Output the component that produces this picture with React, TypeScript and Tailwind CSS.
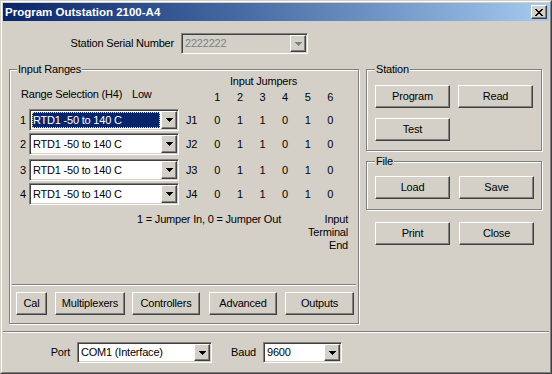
import React from "react";

const jumpers = ["0", "1", "1", "0", "1", "0"];

function Arrow({ disabled = false }: { disabled?: boolean }) {
  const fill = disabled ? "#808080" : "#000000";
  return (
    <svg width="7" height="4" viewBox="0 0 7 4" shapeRendering="crispEdges">
      <rect x="0" y="0" width="7" height="1" fill={fill} />
      <rect x="1" y="1" width="5" height="1" fill={fill} />
      <rect x="2" y="2" width="3" height="1" fill={fill} />
      <rect x="3" y="3" width="1" height="1" fill={fill} />
    </svg>
  );
}

function Btn({ children, className = "" }: { children?: React.ReactNode; className?: string }) {
  return (
    <div
      className={
        "flex items-center justify-center border border-t-white border-l-white border-r-[#404040] border-b-[#404040] bg-[#d4d0c8] shadow-[inset_-1px_-1px_0_#808080] " +
        className
      }
    >
      {children}
    </div>
  );
}

function Combo({
  value,
  className = "",
  selected = false,
  disabled = false,
}: {
  value: string;
  className?: string;
  selected?: boolean;
  disabled?: boolean;
}) {
  return (
    <div
      className={
        "flex border border-t-[#808080] border-l-[#808080] border-r-white border-b-white shadow-[inset_1px_1px_0_#404040,inset_-1px_-1px_0_#d4d0c8] p-px " +
        (disabled ? "bg-[#d4d0c8] " : "bg-white ") +
        className
      }
    >
      <div className="flex min-w-0 flex-1 items-center p-px">
        {selected ? (
          <span className="flex h-full flex-1 items-center bg-[#0a246a] pl-px text-white outline outline-1 -outline-offset-1 outline-dotted outline-[#e8e0a0]">
            {value}
          </span>
        ) : (
          <span className={"pl-px " + (disabled ? "text-[#808080]" : "")}>{value}</span>
        )}
      </div>
      <Btn className="w-[16px]">
        <Arrow disabled={disabled} />
      </Btn>
    </div>
  );
}

function Group({
  label,
  className = "",
  labelClass = "left-[7px]",
  children,
}: {
  label: string;
  className?: string;
  labelClass?: string;
  children?: React.ReactNode;
}) {
  return (
    <div
      className={
        "relative border border-[#808080] shadow-[1px_1px_0_#ffffff,inset_1px_1px_0_#ffffff] " + className
      }
    >
      <span className={"absolute -top-[7px] bg-[#d4d0c8] px-px leading-[13px] " + labelClass}>{label}</span>
      {children}
    </div>
  );
}

function CloseGlyph() {
  const rows = [0, 1, 2, 3, 4, 5, 6];
  return (
    <svg width="8" height="7" viewBox="0 0 8 7" shapeRendering="crispEdges">
      {rows.map((i) => (
        <g key={i}>
          <rect x={i} y={i} width="2" height="1" fill="#000" />
          <rect x={6 - i} y={i} width="2" height="1" fill="#000" />
        </g>
      ))}
    </svg>
  );
}

function RangeRow({ n, className = "", selected = false }: { n: number; className?: string; selected?: boolean }) {
  return (
    <div className={"flex h-[22px] items-center pl-[10px] " + className}>
      <span className="w-[9px]">{n}</span>
      <Combo value="RTD1 -50 to 140 C" selected={selected} className="h-[22px] w-[150px]" />
      <span className="ml-[7px] w-[20px]">J{n}</span>
      {jumpers.map((v, i) => (
        <span key={i} className="w-[22.6px] text-center">
          {v}
        </span>
      ))}
    </div>
  );
}

export default function App() {
  return (
    <div className="h-[374px] w-[552px] border border-t-[#d4d0c8] border-l-[#d4d0c8] border-r-[#404040] border-b-[#404040] bg-[#d4d0c8] font-['Liberation_Sans',Arial,sans-serif] text-[11px] leading-[13px] tracking-[-0.2px] text-black">
      <div className="flex h-full flex-col border border-t-white border-l-white border-r-[#808080] border-b-[#808080] p-px">
        {/* title bar */}
        <div className="flex h-[18px] items-center bg-gradient-to-r from-[#0a246a] to-[#a6caf0] pl-[2px] pr-[2px]">
          <span className="flex-1 text-[11.5px] font-bold tracking-normal text-white">Program Outstation 2100-A4</span>
          <Btn className="h-[14px] w-[16px]">
            <CloseGlyph />
          </Btn>
        </div>

        {/* serial */}
        <div className="mt-[12px] flex h-[21px] items-center">
          <span className="w-[171px] text-right">Station Serial Number</span>
          <Combo value="2222222" disabled className="ml-[7px] h-[21px] w-[127px]" />
        </div>

        {/* main area */}
        <div className="mt-[15px] flex">
          <Group label="Input Ranges" className="ml-[6px] flex h-[255px] w-[350px] flex-col">
            <div className="mt-[5px] pl-[176px]">
              <span className="block w-[155px] text-center">Input Jumpers</span>
            </div>
            <div className="flex items-start pl-[11px]">
              <span className="w-[111px]">Range Selection (H4)</span>
              <span className="w-[74px]">Low</span>
              {jumpers.map((_, i) => (
                <span key={i} className="w-[22.6px] pt-[3px] text-center">
                  {i + 1}
                </span>
              ))}
            </div>
            <RangeRow n={1} selected className="mt-[5px]" />
            <RangeRow n={2} className="mt-[2px]" />
            <RangeRow n={3} className="mt-[4px]" />
            <RangeRow n={4} className="mt-[2px]" />
            <div className="mt-[8px] flex items-start justify-between pl-[127px] pr-[10px]">
              <span>1 = Jumper In, 0 = Jumper Out</span>
              <span className="text-right">
                Input
                <br />
                Terminal
                <br />
                End
              </span>
            </div>
            <div className="mx-[2px] mt-auto h-[2px] border-t border-b border-t-[#808080] border-b-white" />
            <div className="mb-[8px] mt-[6px] flex h-[23px] pl-[6px]">
              <Btn className="w-[31px]">Cal</Btn>
              <Btn className="ml-[8px] w-[70px]">Multiplexers</Btn>
              <Btn className="ml-[7px] w-[68px]">Controllers</Btn>
              <Btn className="ml-[9px] w-[68px]">Advanced</Btn>
              <Btn className="ml-[8px] w-[69px]">Outputs</Btn>
            </div>
          </Group>

          <div className="ml-[7px] flex w-[176px] flex-col">
            <Group label="Station" labelClass="left-[8px]" className="h-[82px] pl-[8px]">
              <div className="mt-[15px] flex h-[23px]">
                <Btn className="w-[75px]">Program</Btn>
                <Btn className="ml-[8px] w-[75px]">Read</Btn>
              </div>
              <div className="mt-[10px] flex h-[23px]">
                <Btn className="w-[75px]">Test</Btn>
              </div>
            </Group>
            <Group label="File" labelClass="left-[8px]" className="mt-[10px] h-[49px] pl-[8px]">
              <div className="mt-[14px] flex h-[23px]">
                <Btn className="w-[75px]">Load</Btn>
                <Btn className="ml-[9px] w-[75px]">Save</Btn>
              </div>
            </Group>
            <div className="mt-[12px] flex h-[23px] pl-[9px]">
              <Btn className="w-[75px]">Print</Btn>
              <Btn className="ml-[9px] w-[75px]">Close</Btn>
            </div>
          </div>
        </div>

        {/* bottom separator */}
        <div className="mt-[7px] h-[2px] border-t border-b border-t-[#808080] border-b-white" />

        {/* port / baud */}
        <div className="mt-[9px] flex h-[21px] items-center">
          <span className="w-[67px] text-right">Port</span>
          <Combo value="COM1 (Interface)" className="ml-[7px] h-[21px] w-[135px]" />
          <span className="w-[44px] text-right">Baud</span>
          <Combo value="9600" className="ml-[7px] h-[21px] w-[79px]" />
        </div>
      </div>
    </div>
  );
}
